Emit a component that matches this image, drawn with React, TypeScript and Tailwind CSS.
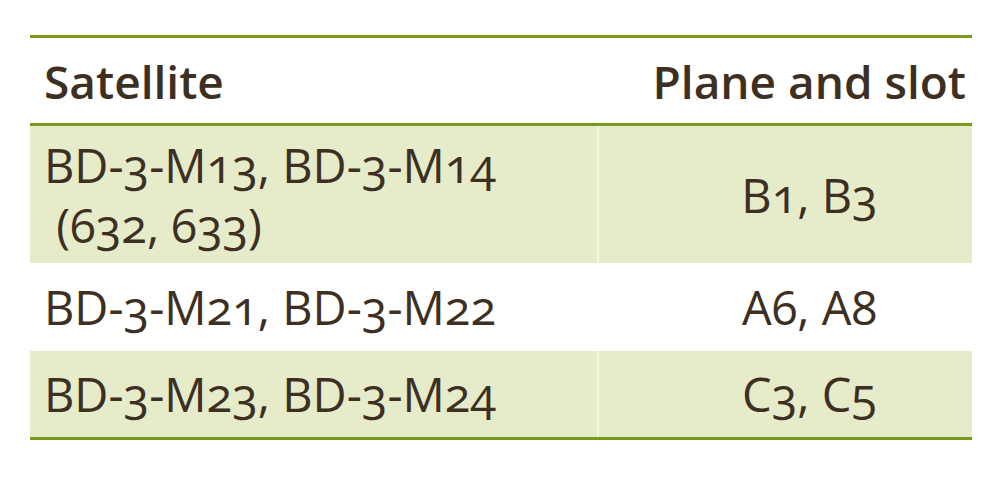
const rows = [
  { sat: (<>BD-3-M13, BD-3-M14<br />{"\u00a0(632, 633)"}</>), slot: "B1, B3", green: true, h: "h-[137px]" },
  { sat: "BD-3-M21, BD-3-M22", slot: "A6, A8", green: false, h: "h-[88px]" },
  { sat: "BD-3-M23, BD-3-M24", slot: "C3, C5", green: true, h: "h-[86px]" },
];

export default function App() {
  return (
    <div className="w-[1000px] h-[482px] bg-white pt-[35px] pl-[30px] text-[#3d3023] [font-family:'Open_Sans',sans-serif] [font-variant-numeric:oldstyle-nums]">
      <div className="w-[942px] border-t-[3px] border-b-[3px] border-[#7a9a1c]">
        <div className="flex h-[88px] items-center border-b-[3px] border-[#7a9a1c] text-[46px] font-semibold leading-[60px]">
          <div className="w-[567px] pl-[14px]">Satellite</div>
          <div className="flex-1 pr-[6px] text-right">Plane and slot</div>
        </div>
        {rows.map((r, i) => (
          <div key={i} className={`flex ${r.h} text-[47px] leading-[60px] ${r.green ? "bg-[#e6ecca]" : "bg-white"}`}>
            <div className="flex w-[567px] items-center pl-[14px]">
              <div>{r.sat}</div>
            </div>
            <div className={`flex flex-1 items-center justify-center pl-[48px] border-l-2 ${r.green ? "border-[#f3f6e6]" : "border-white"}`}>
              {r.slot}
            </div>
          </div>
        ))}
      </div>
    </div>
  );
}
